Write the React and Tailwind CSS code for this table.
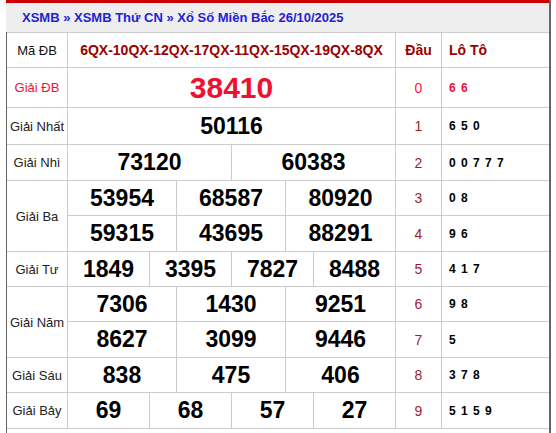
import React from "react";

const rows = [
  { label: "Giải ĐB", nums: [["38410"]], special: true },
  { label: "Giải Nhất", nums: [["50116"]] },
  { label: "Giải Nhì", nums: [["73120", "60383"]] },
  { label: "Giải Ba", nums: [["53954", "68587", "80920"], ["59315", "43695", "88291"]] },
  { label: "Giải Tư", nums: [["1849", "3395", "7827", "8488"]] },
  { label: "Giải Năm", nums: [["7306", "1430", "9251"], ["8627", "3099", "9446"]] },
  { label: "Giải Sáu", nums: [["838", "475", "406"]] },
  { label: "Giải Bảy", nums: [["69", "68", "57", "27"]] },
];

const loto = ["6 6", "6 5 0", "0 0 7 7 7", "0 8", "9 6", "4 1 7", "9 8", "5", "3 7 8", "5 1 5 9"];

const colsClass = {
  1: "grid-cols-1",
  2: "grid-cols-[164px_1fr]",
  3: "grid-cols-[109px_109px_1fr]",
  4: "grid-cols-[82px_82px_82px_1fr]",
};

const NumberCell = ({ nums, special }) => (
  <div className={`grid ${colsClass[nums.length]} border-b border-r border-[#cccccc]`}>
    {nums.map((n, i) => (
      <div
        key={i}
        className={`flex items-center justify-center font-bold leading-none ${
          i < nums.length - 1 ? "border-r border-[#cccccc]" : ""
        } ${special ? "text-[30px] text-[#f0102f]" : "text-[23px] text-black"}`}
      >
        {n}
      </div>
    ))}
  </div>
);

const App = () => {
  let dau = 0;
  return (
    <div className="min-h-[433px] bg-white font-['Liberation_Sans',Arial,sans-serif]">
      <div className="ml-[6px] w-[545px] border-r-2 border-[#666666] min-h-[433px]">
        <div className="h-[3px] bg-[#cc0000]"></div>
        <div className="h-[29px] bg-[#eeeeee] flex items-center pl-[16px] text-[13px] font-bold text-[#2222d6]">
          XSMB » XSMB Thứ CN » Xổ Số Miền Bắc 26/10/2025
        </div>
        <div className="border-l border-[#666666] min-h-[401px]">
          <div className="grid grid-cols-[61px_328px_46px_1fr] grid-rows-[35px_40px_37px_36px_35px_36px_35px_35px_36px_35px_36px] border-t border-[#cccccc] leading-none">
            <div className="flex items-center justify-center border-b border-r border-[#cccccc] text-[13px] text-[#111]">
              Mã ĐB
            </div>
            <div className="flex items-center justify-center border-b border-r border-[#cccccc] text-[14px] font-bold text-[#990000]">
              6QX-10QX-12QX-17QX-11QX-15QX-19QX-8QX
            </div>
            <div className="flex items-center justify-center border-b border-r border-[#cccccc] text-[14px] font-bold text-[#990000]">
              Đầu
            </div>
            <div className="flex items-center border-b border-[#cccccc] pl-[7px] text-[14px] font-bold text-[#990000]">
              Lô Tô
            </div>
            {rows.map((r, ri) => (
              <React.Fragment key={ri}>
                <div
                  className={`flex items-center justify-center border-b border-r border-[#cccccc] text-[13px] ${
                    r.nums.length === 2 ? "row-span-2" : ""
                  } ${r.special ? "text-[#ee1133]" : "text-[#222]"}`}
                >
                  {r.label}
                </div>
                {r.nums.map((line, li) => {
                  const d = dau++;
                  return (
                    <React.Fragment key={li}>
                      <NumberCell nums={line} special={r.special} />
                      <div
                        className={`flex items-center justify-center border-b border-r border-[#cccccc] text-[14px] ${
                          r.special ? "text-[#ff1744]" : "text-[#a01c2c]"
                        }`}
                      >
                        {d}
                      </div>
                      <div
                        className={`flex items-center border-b border-[#cccccc] pl-[7px] text-[12px] font-bold tracking-[1px] ${
                          r.special ? "text-[#ee1133]" : "text-black"
                        }`}
                      >
                        {loto[d]}
                      </div>
                    </React.Fragment>
                  );
                })}
              </React.Fragment>
            ))}
          </div>
        </div>
      </div>
    </div>
  );
};

export default App;
